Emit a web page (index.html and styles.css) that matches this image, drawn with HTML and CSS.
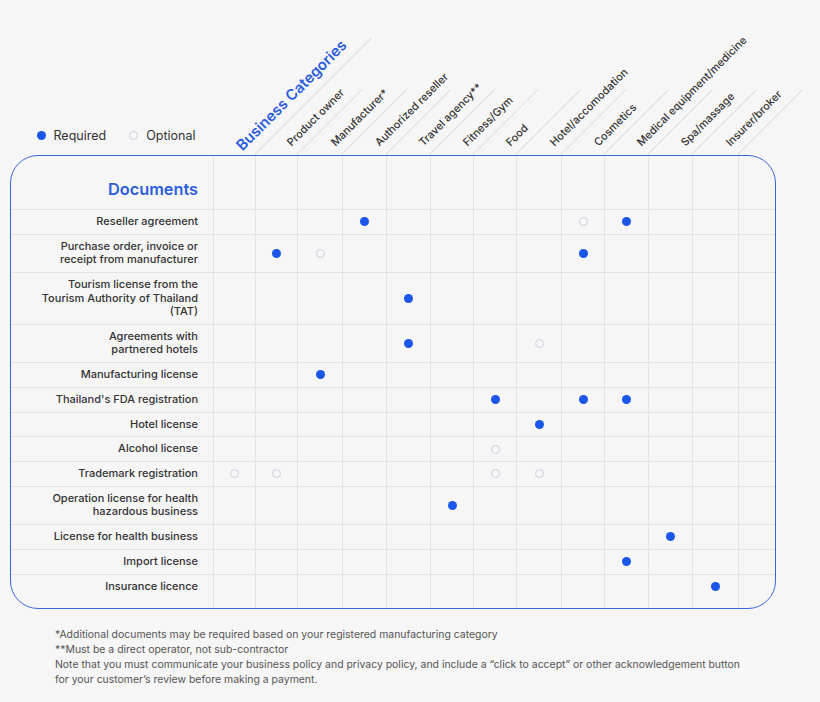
FILE: index.html
```html
<!DOCTYPE html>
<html>
<head>
    <meta charset="utf-8">
    <link rel="stylesheet" href="styles.css">
</head>
<body>
    <div class="chart">
        <div class="top cols" id="headRow">
            <div class="legend">
                <span class="legend-item"><span class="dot required"></span>Required</span>
                <span class="legend-item"><span class="dot optional"></span>Optional</span>
            </div>
        </div>
        <div class="matrix cols" id="matrix"></div>
    </div>

    <div class="notes">
        <p>*Additional documents may be required based on your registered manufacturing category</p>
        <p>**Must be a direct operator, not sub-contractor</p>
        <p>Note that you must communicate your business policy and privacy policy, and include a “click to accept” or other acknowledgement button<br>for your customer’s review before making a payment.</p>
    </div>

    <script>
        const categories = [
            'Business Categories', 'Product owner', 'Manufacturer*', 'Authorized reseller',
            'Travel agency**', 'Fitness/Gym', 'Food', 'Hotel/accomodation', 'Cosmetics',
            'Medical equipment/medicine', 'Spa/massage', 'Insurer/broker'
        ];

        // R = required, O = optional, one character per category column
        const documents = [
            ['Reseller agreement', '...R....OR..'],
            ['Purchase order, invoice or\nreceipt from manufacturer', '.RO.....R...'],
            ['Tourism license from the\nTourism Authority of Thailand\n(TAT)', '....R.......'],
            ['Agreements with\npartnered hotels', '....R..O....'],
            ['Manufacturing license', '..R.........'],
            ["Thailand's FDA registration", '......R.RR..'],
            ['Hotel license', '.......R....'],
            ['Alcohol license', '......O.....'],
            ['Trademark registration', 'OO....OO....'],
            ['Operation license for health\nhazardous business', '.....R......'],
            ['License for health business', '..........R.'],
            ['Import license', '.........R..'],
            ['Insurance licence', '...........R']
        ];

        const headRow = document.getElementById('headRow');
        const matrix = document.getElementById('matrix');

        function el(cls, text) {
            const node = document.createElement('div');
            node.className = cls;
            if (text) node.textContent = text;
            return node;
        }

        // Rotated column headings
        categories.forEach((name, i) => {
            const head = el('head-cell' + (i === 1 ? ' long-line' : '') + (i > 0 ? ' line' : ''));
            const label = el(i === 0 ? 'head-label title' : 'head-label', name);
            head.appendChild(label);
            headRow.appendChild(head);
        });
        headRow.appendChild(el('head-cell line'));

        // Header row
        matrix.appendChild(el('cell label docs-title', 'Documents'));
        for (let i = 0; i <= categories.length; i++) {
            matrix.appendChild(el('cell docs-head' + (i === categories.length ? ' end' : '')));
        }

        // Document rows
        documents.forEach(([name, marks], r) => {
            const last = r === documents.length - 1 ? ' last' : '';
            matrix.appendChild(el('cell label' + last, name));
            for (let i = 0; i <= categories.length; i++) {
                const cell = el('cell mark' + last + (i === categories.length ? ' end' : ''));
                const m = marks[i];
                if (m === 'R') cell.appendChild(el('dot required'));
                if (m === 'O') cell.appendChild(el('dot optional'));
                matrix.appendChild(cell);
            }
        });
    </script>
</body>
</html>
```

FILE: styles.css
```css
body {
    margin: 0;
    background-color: #f6f6f6;
    font-family: Inter, "Liberation Sans", sans-serif;
    color: #333;
}
.chart {
    margin-left: 10px;
    width: 766px;
}
.cols {
    display: grid;
    grid-template-columns: 203px 42px 42px 45px 44px 44px 43px 43px 45px 43px 44px 44px 46px 1fr;
}
.top {
    height: 155px;
    border-left: 1.5px solid transparent;
    border-right: 1.5px solid transparent;
}
.legend {
    align-self: end;
    display: flex;
    align-items: center;
    gap: 23px;
    padding: 0 0 11.5px 25.5px;
    font-size: 12.5px;
    line-height: 16px;
}
.legend-item {
    display: flex;
    align-items: center;
    gap: 8px;
}
.dot {
    width: 9px;
    height: 9px;
    border-radius: 50%;
    box-sizing: border-box;
}
.dot.required {
    background-color: #1b56ea;
}
.dot.optional {
    border: 1.5px solid #c9d1e2;
}
.head-cell {
    position: relative;
}
.head-cell.line::before {
    content: "";
    position: absolute;
    left: -1px;
    bottom: 0;
    width: 92px;
    height: 1px;
    background-color: #dedede;
    transform-origin: 0 100%;
    transform: rotate(-45deg);
}
.head-cell.long-line::before {
    width: 165px;
}
.head-label {
    position: absolute;
    left: 50%;
    bottom: -7px;
    font-size: 10.8px;
    font-weight: 500;
    line-height: 14px;
    white-space: nowrap;
    transform-origin: 0 50%;
    transform: rotate(-45deg) translate(16px, 1.5px);
}
.head-label.title {
    bottom: -9px;
    font-size: 15px;
    font-weight: 600;
    line-height: 18px;
    color: #2c5ddb;
    transform: rotate(-45deg) translate(7.7px, -2.2px);
}
.matrix {
    border: 1.5px solid #3b66d6;
    border-radius: 28px;
    overflow: hidden;
}
.cell {
    box-sizing: border-box;
    border-right: 1px solid #e4e4e4;
    border-bottom: 1px solid #e4e4e4;
}
.cell.end {
    border-right: none;
}
.cell.last {
    border-bottom: none;
    padding-bottom: 15px !important;
}
.label {
    padding: 5px 15px 5.25px 0;
    text-align: right;
    font-size: 11px;
    font-weight: 500;
    line-height: 13.5px;
    white-space: pre-line;
}
.docs-title {
    height: 54px;
    display: flex;
    justify-content: flex-end;
    align-items: flex-end;
    padding-bottom: 10px;
    font-size: 16.3px;
    font-weight: 600;
    line-height: 20px;
    color: #2c5ddb;
}
.docs-head {
    height: 54px;
}
.mark {
    display: flex;
    align-items: center;
    justify-content: center;
    padding: 5px 0 5.25px;
}
.notes {
    margin: 18px 0 0 55px;
    font-size: 10.45px;
    line-height: 15px;
    color: #555;
}
.notes p {
    margin: 0;
}
```
